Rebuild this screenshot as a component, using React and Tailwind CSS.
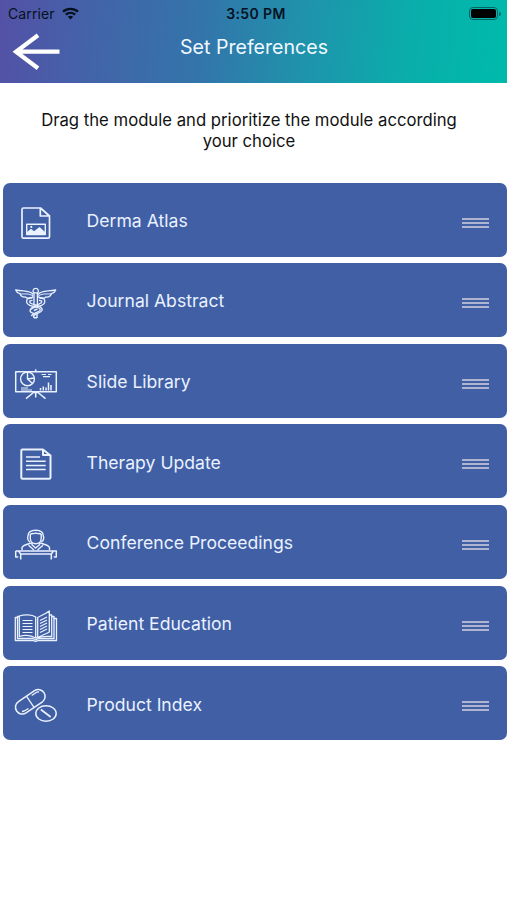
function FileImageIcon() {
  return (
    <>
      <path strokeWidth="1.7" d="M9.5 3H26.500L35.500 11V31.500Q35.500 33.200 34 33.200H9.500Q8 33.200 8 31.500V4.500Q8 3 9.500 3ZM26.300 3V11H35.500" />
      <path strokeWidth="1.4" d="M12.700 19.200H31.300V29.500H12.700Z" />
      <path fill="currentColor" stroke="none" d="M13 29V27L17 23.800L20 26.300L25.500 22L31 27V29.500H13Z" />
      <circle cx="17.300" cy="21.900" r="1.100" fill="currentColor" stroke="none" />
    </>
  );
}

function CaduceusIcon() {
  return (
    <>
      <path d="M19.300 9.500C15.500 4.800 10 6.800 1.700 5C2.500 7.300 4 8.200 6 8.700C7 11.500 9 12.300 11.500 12C14 14.300 17 13.500 19.300 11.500" />
      <path d="M24.100 9.500C27.900 4.800 33.400 6.800 41.700 5C40.900 7.300 39.400 8.200 37.400 8.700C36.400 11.500 34.400 12.300 31.900 12C29.400 14.300 26.400 13.500 24.100 11.500" />
      <path strokeWidth="1" d="M6 8.900C10.500 9.300 14 8 19 10.800M37.400 8.900C32.900 9.300 29.400 8 24.400 10.800" />
      <path d="M20 20V8Q18.500 6.800 19.200 5Q19.900 3.300 21.700 3.300Q23.500 3.300 24.200 5Q24.900 6.800 23.400 8V20M19.700 7.800H23.700" />
      <path d="M18.500 12.800C11.500 12 11 18.300 15.800 20.300C19 21.500 26.800 21.800 26.300 25C26 27.300 19 27.500 17.300 31" />
      <path d="M18.500 15.300C14.800 15.200 14.800 17.800 18 18.800C23 20.300 29.300 22 28 25.500C26.800 28.200 20.500 28.700 19 31.500" />
      <path d="M24.900 12.800C31.900 12 32.400 18.300 27.600 20.300C23.500 21.900 16.500 22.500 16 25.500C15.900 27.600 18.500 28 20.500 28.800" />
      <path d="M24.900 15.300C28.600 15.200 28.600 17.800 25.400 18.800C21 20.200 17.500 21.500 16.200 25" />
      <path strokeWidth="1.400" d="M19.800 32.700V30.500M23 33V28.700M19.800 32.700H23M20 25.500L23.500 23.800" />
    </>
  );
}

function PresentationIcon() {
  return (
    <>
      <path strokeWidth="1.500" d="M1.700 5.800H42.300V25.700H1.700Z" />
      <path strokeWidth="1.500" d="M21.700 5.800V3.300" />
      <circle cx="13.500" cy="12.900" r="6.900" strokeWidth="1.400" />
      <path strokeWidth="1.400" d="M13.500 6V13L18.500 17.500M13.500 13L20.300 12" />
      <path strokeWidth="1.200" d="M27.500 8.500H32M34 8.500H37.500M29 10.700H36M7 22H14M7 24H18" />
      <path strokeWidth="1.500" d="M26.500 24.500V22M29.300 24.500V20.500M32 24.500V21.500M34.500 24.500V16.500M37 24.500V19" />
      <path strokeWidth="1.500" d="M19.500 26.500L12 32.700M24 26.500L31.500 32.700M21.700 26V31.500M18.500 26.500H25" />
    </>
  );
}

function DocumentIcon() {
  return (
    <>
      <path strokeWidth="2" d="M8.500 3.500H29L36.500 9.500V31.500Q36.500 32.800 35.200 32.800H8.500Q7.300 32.800 7.300 31.500V4.800Q7.300 3.500 8.500 3.500ZM29 3.500V9H36.500" />
      <path strokeWidth="1.500" d="M12 11H26M12 15.200H31.700M12 19.400H31.700M12 23.600H31.700" />
    </>
  );
}

function SpeakerIcon() {
  return (
    <>
      <path strokeWidth="1.400" d="M16 15C13.300 14 13.500 10 14 9C14 5 17.500 3.200 21.700 3.200C26 3.200 29.300 5 29.300 9C30 10 30 14 27.300 15" />
      <path strokeWidth="1.400" d="M16.300 7V11.500C16.500 18.500 27 18.500 27.200 11.500V7M16.300 7.500C18 5.500 20 7.500 21.700 6C23.400 7.500 25.500 5.500 27.200 7.500" />
      <path strokeWidth="1.400" d="M8 23V20.500C9 18 13 17.300 18 15.800V17.800L21.700 21L25.500 17.800V15.800C30.500 17.300 34.500 18 35.500 20.500V23M14.500 18.300L20 23M29 18.300L23.500 23" />
      <path strokeWidth="1.500" d="M1.700 24H42.300V30H39.700M1.700 24V30H4.300M6.700 32.500V27H37.300V32.500M4.500 24L6.700 27M39.500 24L37.300 27" />
    </>
  );
}

function BookIcon() {
  return (
    <>
      <path d="M4 9.500H1.300V32.500H19.500Q21.700 34 24 32.500H42.500V10.500H39.500" />
      <path d="M5 8.500H3.500V30.500H19L21.700 32L24.500 30.500H40V8.500H37" />
      <path d="M21.700 30V9C18 6.300 10 6.300 5.300 8V28.500C10 27 17 27 21.700 30Z" />
      <path d="M23.700 29.500V9.500C27 7.500 30.500 6.500 35.300 3V24C31 26.500 27 27.500 23.700 29.500ZM35.500 7H37.700V28.500C32 28 27 28.500 21.700 30" />
      <path strokeWidth="1.200" d="M8.500 12.500H18.500M8.500 15.500H18.500M8.500 18.500H18.500M8.500 21.500H18.500M8.500 24.500H18.500M26 12.500L33 9M26 15.500L33 12M26 18.500L33 15M26 21.500L33 18M26 24.500L33 21" />
    </>
  );
}

function PillsIcon() {
  return (
    <>
      <g transform="rotate(-34 16.300 13.800)">
        <rect x="-0.200" y="7" width="33" height="13.600" rx="6.800" strokeWidth="1.500" />
        <path d="M16.300 7.200V20.400M4 17.200Q6 18.600 11 18.300M21 9.300H25.500Q28 9.300 29 10.700" />
      </g>
      <ellipse cx="32" cy="25.500" rx="10.200" ry="7.800" strokeWidth="1.500" />
      <path strokeWidth="1.700" d="M26.800 21.500L36.700 29" />
    </>
  );
}

const modules = [
  { title: "Derma Atlas", icon: FileImageIcon },
  { title: "Journal Abstract", icon: CaduceusIcon },
  { title: "Slide Library", icon: PresentationIcon },
  { title: "Therapy Update", icon: DocumentIcon },
  { title: "Conference Proceedings", icon: SpeakerIcon },
  { title: "Patient Education", icon: BookIcon },
  { title: "Product Index", icon: PillsIcon },
];

function StatusBar() {
  return (
    <div className="grid grid-cols-3 items-center h-[27px] pl-2 pr-[6px] text-[#06111f]">
      <div className="flex items-center gap-[7px]">
        <span className="text-[14px] tracking-[0.1px]">Carrier</span>
        <svg className="w-[17px] h-[13px]" viewBox="0 0 17 13" fill="none" stroke="currentColor" strokeWidth="2.3">
          <path d="M1 4.700C5.200 0.800 11.800 0.800 16 4.700M3.800 7.700C6.500 5.300 10.500 5.300 13.200 7.700" />
          <path fill="currentColor" stroke="none" d="M5.800 9.700C7.400 8.400 9.600 8.400 11.200 9.700L8.500 12.500Z" />
        </svg>
      </div>
      <span className="pl-[3px] text-center text-[14px] font-semibold tracking-[0.400px]">3:50 PM</span>
      <div className="flex items-center justify-end gap-px">
        <div className="w-[29px] h-[13px] p-px rounded-[4px] border border-[#06111f]/50">
          <div className="h-full rounded-[2px] bg-black" />
        </div>
        <div className="w-[2px] h-[4px] rounded-r-full bg-[#06111f]/50" />
      </div>
    </div>
  );
}

function Header() {
  return (
    <header className="h-[83px] bg-[linear-gradient(95deg,#5451a6_0%,#4363a9_18%,#3375aa_40%,#1f93ac_60%,#0aadab_80%,#00b9ab_97%)]">
      <StatusBar />
      <div className="grid grid-cols-[60px_1fr_60px] pl-3">
        <svg className="w-12 h-[37px] mt-[6px] text-white" viewBox="0 0 48 37" fill="none" stroke="currentColor" strokeWidth="4.200">
          <path d="M47.500 18.700H5M26 2.200L4 18.700L26 35.200" />
        </svg>
        <h1 className="mt-[6px] pr-[11px] text-center text-[19.600px] leading-[28px] text-[#f0f8ff]">Set Preferences</h1>
      </div>
    </header>
  );
}

function ModuleRow({ title, icon: Icon }) {
  return (
    <li className="flex h-[74px] rounded-[7px] bg-[#405fa5] pl-[11px] pr-[18px] text-[#eaf1ff]">
      <svg className="w-11 h-[38px] mt-[22px] shrink-0" viewBox="0 0 44 38" fill="none" stroke="currentColor" strokeWidth="1.300" strokeLinejoin="round">
        <Icon />
      </svg>
      <span className="ml-[28.600px] mt-[25.300px] text-[17.600px] leading-[26px]">{title}</span>
      {/* drag handle */}
      <div className="ml-auto mt-[35px] flex w-[27.500px] flex-col gap-[2px]">
        <div className="h-[2px] bg-[#afb5d1]" />
        <div className="h-[2px] bg-[#afb5d1]" />
        <div className="h-[2px] bg-[#afb5d1]" />
      </div>
    </li>
  );
}

export default function App() {
  return (
    <div className="h-[900px] w-[507px] overflow-hidden bg-white font-[Inter,sans-serif]">
      <Header />
      <p className="mx-auto mt-[27px] w-[440px] pr-[9px] text-center text-[16.700px] leading-[20.500px] text-[#111]">
        Drag the module and prioritize the module according your choice
      </p>
      <ul className="mt-[31.500px] ml-[3px] flex flex-col gap-[6.670px]">
        {modules.map((m) => (
          <ModuleRow key={m.title} {...m} />
        ))}
      </ul>
    </div>
  );
}
